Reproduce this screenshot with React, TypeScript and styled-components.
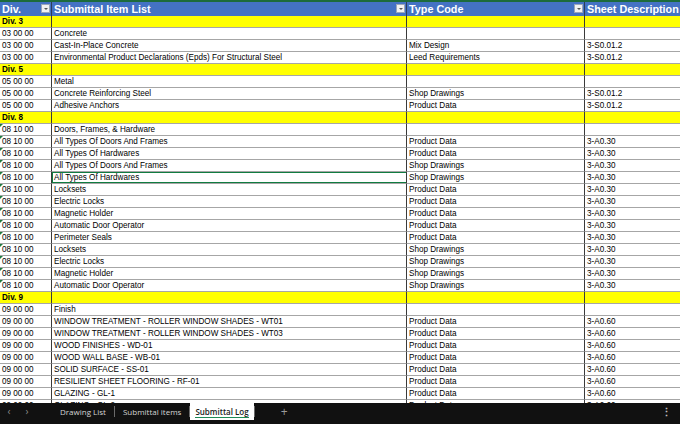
import styled, { createGlobalStyle } from 'styled-components';

const Global = createGlobalStyle`
    html, body {
        margin: 0;
        padding: 0;
        background: #ffffff;
        overflow: hidden;
    }
`;

type Row =
    | { div: string }
    | { code: string; item: string; type?: string; sheet?: string; flag?: boolean; selected?: boolean };

const rows: Row[] = [
    { div: 'Div. 3' },
    { code: '03 00 00', item: 'Concrete' },
    { code: '03 00 00', item: 'Cast-In-Place Concrete', type: 'Mix Design', sheet: '3-S0.01.2' },
    { code: '03 00 00', item: 'Environmental Product Declarations (Epds) For Structural Steel', type: 'Leed Requirements', sheet: '3-S0.01.2' },
    { div: 'Div. 5' },
    { code: '05 00 00', item: 'Metal' },
    { code: '05 00 00', item: 'Concrete Reinforcing Steel', type: 'Shop Drawings', sheet: '3-S0.01.2' },
    { code: '05 00 00', item: 'Adhesive Anchors', type: 'Product Data', sheet: '3-S0.01.2' },
    { div: 'Div. 8' },
    { code: '08 10 00', item: 'Doors, Frames, & Hardware', flag: true },
    { code: '08 10 00', item: 'All Types Of Doors And Frames', type: 'Product Data', sheet: '3-A0.30', flag: true },
    { code: '08 10 00', item: 'All Types Of Hardwares', type: 'Product Data', sheet: '3-A0.30', flag: true },
    { code: '08 10 00', item: 'All Types Of Doors And Frames', type: 'Shop Drawings', sheet: '3-A0.30', flag: true },
    { code: '08 10 00', item: 'All Types Of Hardwares', type: 'Shop Drawings', sheet: '3-A0.30', flag: true, selected: true },
    { code: '08 10 00', item: 'Locksets', type: 'Product Data', sheet: '3-A0.30', flag: true },
    { code: '08 10 00', item: 'Electric Locks', type: 'Product Data', sheet: '3-A0.30', flag: true },
    { code: '08 10 00', item: 'Magnetic Holder', type: 'Product Data', sheet: '3-A0.30', flag: true },
    { code: '08 10 00', item: 'Automatic Door Operator', type: 'Product Data', sheet: '3-A0.30', flag: true },
    { code: '08 10 00', item: 'Perimeter Seals', type: 'Product Data', sheet: '3-A0.30', flag: true },
    { code: '08 10 00', item: 'Locksets', type: 'Shop Drawings', sheet: '3-A0.30', flag: true },
    { code: '08 10 00', item: 'Electric Locks', type: 'Shop Drawings', sheet: '3-A0.30', flag: true },
    { code: '08 10 00', item: 'Magnetic Holder', type: 'Shop Drawings', sheet: '3-A0.30', flag: true },
    { code: '08 10 00', item: 'Automatic Door Operator', type: 'Shop Drawings', sheet: '3-A0.30', flag: true },
    { div: 'Div. 9' },
    { code: '09 00 00', item: 'Finish' },
    { code: '09 00 00', item: 'WINDOW TREATMENT - ROLLER WINDOW SHADES - WT01', type: 'Product Data', sheet: '3-A0.60' },
    { code: '09 00 00', item: 'WINDOW TREATMENT - ROLLER WINDOW SHADES - WT03', type: 'Product Data', sheet: '3-A0.60' },
    { code: '09 00 00', item: 'WOOD FINISHES - WD-01', type: 'Product Data', sheet: '3-A0.60' },
    { code: '09 00 00', item: 'WOOD WALL BASE - WB-01', type: 'Product Data', sheet: '3-A0.60' },
    { code: '09 00 00', item: 'SOLID SURFACE - SS-01', type: 'Product Data', sheet: '3-A0.60' },
    { code: '09 00 00', item: 'RESILIENT SHEET FLOORING - RF-01', type: 'Product Data', sheet: '3-A0.60' },
    { code: '09 00 00', item: 'GLAZING - GL-1', type: 'Product Data', sheet: '3-A0.60' },
    { code: '09 00 00', item: 'GLAZING - GL-2', type: 'Product Data', sheet: '3-A0.60' },
];

const Page = styled.div`
    display: flex;
    flex-direction: column;
    height: 100vh;
    font-family: "Liberation Sans", Arial, sans-serif;
`;

const Sheet = styled.div`
    flex: 1;
    overflow: hidden;
    border-top: 2px solid #1d6b3c;
`;

const Grid = styled.div`
    display: grid;
    grid-template-columns: 52px 355px 178px 1fr;
    grid-auto-rows: 12px;
    grid-template-rows: 14px;
`;

const Head = styled.div<{ $last?: boolean }>`
    position: relative;
    background: #4472c4;
    color: #ffffff;
    font-weight: bold;
    font-size: 10.8px;
    line-height: 14px;
    padding-left: 2px;
    border-right: ${p => (p.$last ? 'none' : '1px solid #2e3d57')};
    white-space: nowrap;
    overflow: hidden;
`;

const Filter = styled.span`
    position: absolute;
    right: 1px;
    top: 2px;
    width: 9px;
    height: 9px;
    background: #f2f2f2;
    border: 1px solid #9aa6bb;
    box-sizing: border-box;
    &::after {
        content: '';
        position: absolute;
        left: 2px;
        top: 3px;
        border-left: 2px solid transparent;
        border-right: 2px solid transparent;
        border-top: 2px solid #555;
    }
`;

const Cell = styled.div<{ $band?: boolean; $last?: boolean; $bold?: boolean; $flag?: boolean; $sel?: boolean }>`
    position: relative;
    background: ${p => (p.$band ? '#ffff00' : '#ffffff')};
    color: #000000;
    font-size: 8.15px;
    font-weight: ${p => (p.$bold ? 'bold' : 'normal')};
    line-height: 11px;
    padding-left: 2px;
    border-bottom: 1px solid #a6a6a6;
    border-right: ${p => (p.$last ? 'none' : '1px solid #3a3a3a')};
    box-sizing: border-box;
    white-space: nowrap;
    overflow: hidden;
    ${p => p.$sel && `box-shadow: inset 1px 1px 0 #107c41, inset 0 -1px 0 #107c41;`}
    ${p => p.$flag && `
        &::before {
            content: '';
            position: absolute;
            left: 0;
            top: 0;
            border-top: 3px solid #1e7a3e;
            border-right: 3px solid transparent;
        }
    `}
`;

const Tabs = styled.div`
    height: 21px;
    flex: none;
    background: #111111;
    display: flex;
    align-items: flex-start;
    font-family: "Open Sans", "Noto Sans", sans-serif;
    font-size: 8px;
    line-height: 17px;
    color: #d4d4d4;
`;

const Arrow = styled.span`
    width: 18px;
    height: 17px;
    text-align: center;
    color: #8a8a8a;
    font-size: 10px;
`;

const Spacer = styled.span`
    width: 16px;
`;

const Tab = styled.div<{ $active?: boolean }>`
    height: 17px;
    padding: ${p => (p.$active ? '0 5px' : '0 8px')};
    position: relative;
    white-space: nowrap;
    background: ${p => (p.$active ? '#ffffff' : 'transparent')};
    color: ${p => (p.$active ? '#1a1a1a' : '#d4d4d4')};
    font-weight: ${p => (p.$active ? 600 : 400)};
    ${p => p.$active && `
        &::after {
            content: '';
            position: absolute;
            left: 5px;
            right: 5px;
            bottom: 2px;
            height: 1.5px;
            background: #1f8a55;
        }
    `}
`;

const Sep = styled.span`
    width: 1px;
    height: 11px;
    margin-top: 3px;
    background: #6a6a6a;
`;

const Plus = styled.span`
    margin-left: 26px;
    color: #9a9a9a;
    font-size: 12px;
`;

const Menu = styled.span`
    margin-left: auto;
    margin-right: 8px;
    color: #bdbdbd;
    font-size: 11px;
    font-weight: bold;
`;

export default function App() {
    return (
        <Page>
            <Global />
            <Sheet>
                <Grid>
                    <Head>Div.<Filter /></Head>
                    <Head>Submittal Item List<Filter /></Head>
                    <Head>Type Code<Filter /></Head>
                    <Head $last>Sheet Description</Head>
                    {rows.map((r, i) =>
                        'div' in r ? (
                            [
                                <Cell key={i + 'a'} $band $bold>{r.div}</Cell>,
                                <Cell key={i + 'b'} $band />,
                                <Cell key={i + 'c'} $band />,
                                <Cell key={i + 'd'} $band $last />,
                            ]
                        ) : (
                            [
                                <Cell key={i + 'a'} $flag={r.flag}>{r.code}</Cell>,
                                <Cell key={i + 'b'} $sel={r.selected}>{r.item}</Cell>,
                                <Cell key={i + 'c'}>{r.type}</Cell>,
                                <Cell key={i + 'd'} $last>{r.sheet}</Cell>,
                            ]
                        )
                    )}
                </Grid>
            </Sheet>
            <Tabs>
                <Arrow>‹</Arrow>
                <Arrow>›</Arrow>
                <Spacer />
                <Tab>Drawing List</Tab>
                <Sep />
                <Tab>Submittal items</Tab>
                <Sep />
                <Tab $active>Submittal Log</Tab>
                <Sep />
                <Plus>+</Plus>
                <Menu>⋮</Menu>
            </Tabs>
        </Page>
    );
}
